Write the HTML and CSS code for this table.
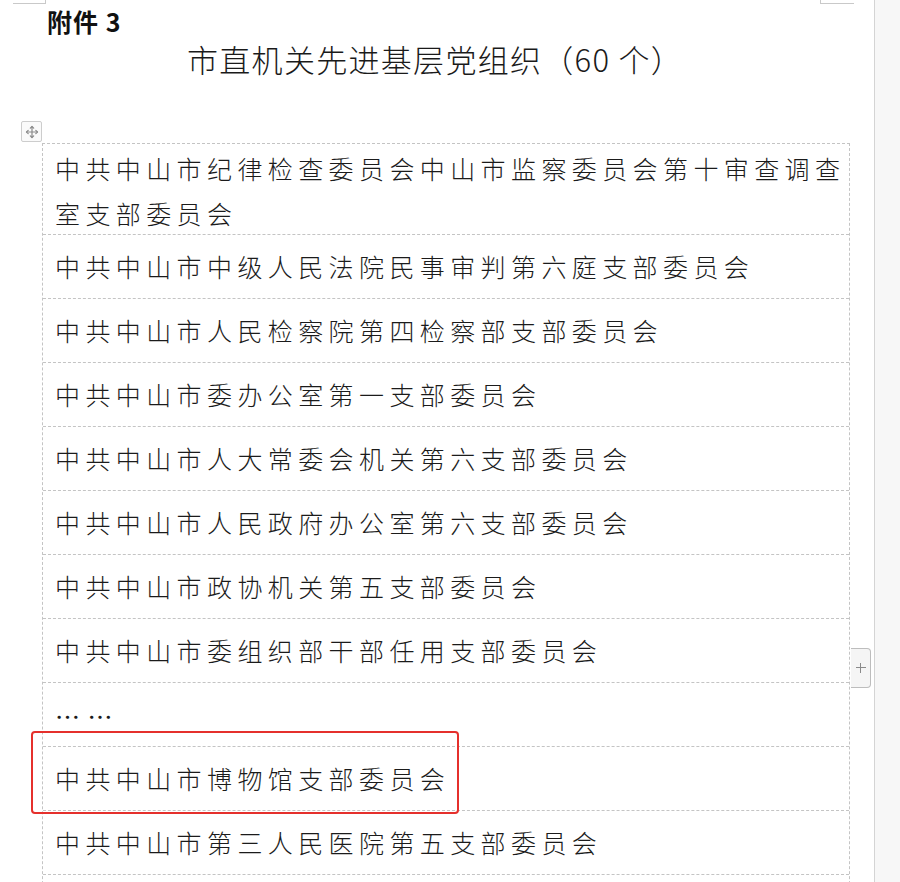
FILE: index.html
```html
<!DOCTYPE html>
<html lang="zh-CN">
<head>
<meta charset="utf-8">
<title>市直机关先进基层党组织</title>
<link rel="stylesheet" href="styles.css">
</head>
<body>
<div class="app">
  <div class="page">
    <span class="crop crop-left"></span>
    <span class="crop crop-right"></span>

    <p class="fujian">附件 3</p>
    <h1 class="title">市直机关先进基层党组织（60 个）</h1>

    <div class="move-handle">
      <svg width="14" height="14" viewBox="0 0 14 14" fill="none" stroke="#8a8a8a" stroke-width="1.2" stroke-linecap="round" stroke-linejoin="round">
        <path d="M7 1.5v11M1.5 7h11"/>
        <path d="M5.3 3.2L7 1.5l1.7 1.7M5.3 10.8L7 12.5l1.7-1.7M3.2 5.3L1.5 7l1.7 1.7M10.8 5.3L12.5 7l-1.7 1.7"/>
      </svg>
    </div>

    <div class="table">
      <div class="row row-double">中共中山市纪律检查委员会中山市监察委员会第十审查调查室支部委员会</div>
      <div class="row">中共中山市中级人民法院民事审判第六庭支部委员会</div>
      <div class="row">中共中山市人民检察院第四检察部支部委员会</div>
      <div class="row">中共中山市委办公室第一支部委员会</div>
      <div class="row">中共中山市人大常委会机关第六支部委员会</div>
      <div class="row">中共中山市人民政府办公室第六支部委员会</div>
      <div class="row">中共中山市政协机关第五支部委员会</div>
      <div class="row">中共中山市委组织部干部任用支部委员会</div>
      <div class="row row-dots">… …</div>
      <div class="row">中共中山市博物馆支部委员会</div>
      <div class="row">中共中山市第三人民医院第五支部委员会</div>
      <div class="row">&nbsp;</div>
    </div>

    <div class="highlight"></div>
    <div class="add-btn"><span class="plus"></span></div>
  </div>
  <div class="gutter"></div>
</div>
</body>
</html>
```

FILE: styles.css
```css
html, body {
  margin: 0;
  padding: 0;
}

body {
  background: #f7f7f7;
  font-family: "Noto Sans CJK SC", "Noto Sans", sans-serif;
  color: #1b1b1b;
}

.app {
  display: flex;
  width: 900px;
  height: 882px;
  overflow: hidden;
}

.page {
  position: relative;
  width: 875px;
  flex: 0 0 875px;
  background: #ffffff;
  border-right: 1px solid #d4d4d4;
  box-sizing: border-box;
  overflow: hidden;
}

.gutter {
  flex: 1;
  background: #f7f7f7;
}

/* page corner marks */
.crop {
  position: absolute;
  top: 0;
  height: 3px;
  border-bottom: 1px solid #c9c9c9;
}
.crop-left {
  left: 13px;
  width: 32px;
  border-right: 1px solid #c9c9c9;
}
.crop-right {
  left: 820px;
  width: 33px;
  border-left: 1px solid #c9c9c9;
}

.fujian {
  margin: 0;
  padding: 6px 0 0 47px;
  font-size: 25px;
  font-weight: 700;
  letter-spacing: 1px;
  line-height: 30px;
  height: 30px;
  color: #111;
}

.title {
  margin: 3px 0 0 187px;
  font-size: 31px;
  font-weight: 300;
  letter-spacing: 1.3px;
  line-height: 40px;
  height: 40px;
  color: #1a1a1a;
  white-space: nowrap;
}

.move-handle {
  position: absolute;
  left: 21px;
  top: 121px;
  width: 21px;
  height: 21px;
  box-sizing: border-box;
  border: 1px solid #cdcdcd;
  border-radius: 2px;
  background: #fafafa;
  display: flex;
  align-items: center;
  justify-content: center;
}

.table {
  margin: 64px 0 0 42px;
  width: 808px;
  border-top: 1px dashed #c4c4c4;
  border-left: 1px dashed #c4c4c4;
  border-right: 1px dashed #c4c4c4;
  box-sizing: border-box;
}

.row {
  display: flex;
  align-items: center;
  min-height: 63px;
  border-bottom: 1px dashed #c4c4c4;
  padding: 0 0 0 12px;
  font-size: 25px;
  font-weight: 300;
  letter-spacing: 5.4px;
  line-height: 45px;
  color: #1b1b1b;
}

.row-double {
  display: block;
  min-height: 0;
  padding-top: 2px;
  height: 88px;
}

.row-dots {
  letter-spacing: 1px;
  padding-top: 4px;
  min-height: 59px;
  font-weight: 400;
}

.highlight {
  position: absolute;
  left: 31px;
  top: 731px;
  width: 428px;
  height: 83px;
  box-sizing: border-box;
  border: 2px solid #e5302c;
  border-radius: 4px;
}

.add-btn {
  position: absolute;
  left: 851px;
  top: 648px;
  width: 20px;
  height: 40px;
  box-sizing: border-box;
  border: 1px solid #bdbdbd;
  border-left: none;
  border-radius: 0 4px 4px 0;
  background: #f5f5f5;
  display: flex;
  align-items: center;
  justify-content: center;
}

.plus {
  position: relative;
  width: 10px;
  height: 10px;
}
.plus::before,
.plus::after {
  content: "";
  position: absolute;
  background: #8a8a8a;
}
.plus::before {
  left: 0;
  top: 4px;
  width: 10px;
  height: 1px;
}
.plus::after {
  left: 4px;
  top: 0;
  width: 1px;
  height: 10px;
}
```
